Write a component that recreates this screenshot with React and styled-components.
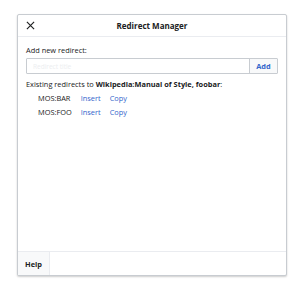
import React from "react";
import styled, { createGlobalStyle } from "styled-components";

const Global = createGlobalStyle`
  html, body { margin: 0; padding: 0; background: #fff; }
  body { font-family: "Open Sans", "Noto Sans", sans-serif; color: #202122; }
`;

const Page = styled.div`
  width: 300px;
  height: 288px;
  box-sizing: border-box;
  padding: 14px 13px 0 17px;
`;

const Dialog = styled.div`
  height: 262px;
  box-sizing: border-box;
  border: 1px solid #c8ccd1;
  border-radius: 2px;
  box-shadow: 0 1px 2px rgba(0, 0, 0, 0.2);
  display: flex;
  flex-direction: column;
  background: #fff;
`;

const Header = styled.div`
  height: 21px;
  flex: none;
  border-bottom: 1px solid #eaecf0;
  display: grid;
  grid-template-columns: 24px 1fr 24px;
  align-items: center;
`;

const Close = styled.button`
  border: 0;
  background: none;
  padding: 0;
  margin-left: 5px;
  width: 14px;
  height: 14px;
  display: flex;
  align-items: center;
  justify-content: center;
  color: #202122;
`;

const Title = styled.div`
  text-align: center;
  font-weight: 700;
  font-size: 8px;
  color: #202122;
`;

const Body = styled.div`
  flex: 1;
  padding: 8px 8px 0 8px;
  font-size: 7.4px;
  color: #202122;
`;

const Label = styled.div`
  line-height: 10px;
  margin-bottom: 3px;
  color: #202122;
`;

const InputRow = styled.div`
  display: flex;
  height: 16px;
  box-sizing: border-box;
  border: 1px solid #c8ccd1;
  border-radius: 1px;
`;

const Input = styled.input`
  flex: 1;
  min-width: 0;
  border: 0;
  outline: none;
  padding: 0 6px;
  font: inherit;
  font-size: 6.5px;
  background: #fff;
  &::placeholder { color: #eceef0; }
`;

const AddButton = styled.button`
  flex: none;
  width: 28px;
  border: 0;
  border-left: 1px solid #c8ccd1;
  background: #f8f9fa;
  color: #36c;
  font: inherit;
  font-size: 7.4px;
  font-weight: 700;
  padding: 0;
`;

const Existing = styled.div`
  margin-top: 5px;
  line-height: 10px;
  color: #202122;
  b { font-weight: 700; }
`;

const List = styled.div`
  margin-top: 4px;
  padding-left: 12px;
  display: grid;
  grid-template-columns: auto auto auto 1fr;
  column-gap: 9px;
  row-gap: 4px;
  line-height: 10px;
`;

const Name = styled.span`
  color: #202122;
`;

const Link = styled.a`
  color: #36c;
  text-decoration: none;
`;

const Footer = styled.div`
  height: 23px;
  flex: none;
  border-top: 1px solid #eaecf0;
  display: flex;
`;

const HelpButton = styled.button`
  width: 32px;
  border: 0;
  border-right: 1px solid #eaecf0;
  background: #f8f9fa;
  font: inherit;
  font-size: 7.4px;
  font-weight: 700;
  color: #202122;
  padding: 0;
`;

const rows = ["MOS:BAR", "MOS:FOO"];

export default function App() {
  return (
    <>
      <Global />
      <Page>
        <Dialog>
          <Header>
            <Close aria-label="Close">
              <svg width="9" height="9" viewBox="0 0 10 10">
                <path d="M1 1 L9 9 M9 1 L1 9" stroke="#202122" strokeWidth="1.3" fill="none" />
              </svg>
            </Close>
            <Title>Redirect Manager</Title>
            <span />
          </Header>
          <Body>
            <Label>Add new redirect:</Label>
            <InputRow>
              <Input placeholder="Redirect title" />
              <AddButton>Add</AddButton>
            </InputRow>
            <Existing>
              Existing redirects to <b>Wikipedia:Manual of Style, foobar</b>:
            </Existing>
            <List>
              {rows.map((r) => (
                <React.Fragment key={r}>
                  <Name>{r}</Name>
                  <Link href="#">Insert</Link>
                  <Link href="#">Copy</Link>
                  <span />
                </React.Fragment>
              ))}
            </List>
          </Body>
          <Footer>
            <HelpButton>Help</HelpButton>
          </Footer>
        </Dialog>
      </Page>
    </>
  );
}
